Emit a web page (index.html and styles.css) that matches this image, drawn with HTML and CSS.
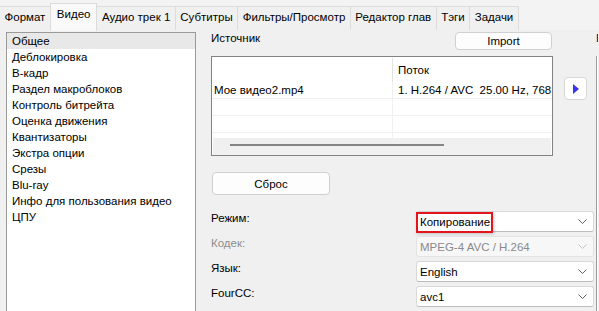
FILE: index.html
```html
<!DOCTYPE html>
<html lang="ru">
<head>
    <meta charset="UTF-8">
    <title>Видео</title>
    <link rel="stylesheet" href="styles.css">
</head>
<body>
    <div class="tabs">
        <div class="tab">Формат</div>
        <div class="tab active">Видео</div>
        <div class="tab">Аудио трек 1</div>
        <div class="tab">Субтитры</div>
        <div class="tab">Фильтры/Просмотр</div>
        <div class="tab">Редактор глав</div>
        <div class="tab">Тэги</div>
        <div class="tab">Задачи</div>
    </div>

    <div class="panel">
        <ul class="nav-list">
            <li class="selected">Общее</li>
            <li>Деблокировка</li>
            <li>B-кадр</li>
            <li>Раздел макроблоков</li>
            <li>Контроль битрейта</li>
            <li>Оценка движения</li>
            <li>Квантизаторы</li>
            <li>Экстра опции</li>
            <li>Срезы</li>
            <li>Blu-ray</li>
            <li>Инфо для пользования видео</li>
            <li>ЦПУ</li>
        </ul>

        <div class="main">
            <div class="source-head">
                <span>Источник</span>
                <button class="btn import">Import</button>
            </div>

            <div class="source-row">
                <div class="streams">
                    <div class="grid">
                        <div class="row head"><div class="cell c1"></div><div class="cell c2">Поток</div></div>
                        <div class="row first"><div class="cell c1">Мое видео2.mp4</div><div class="cell c2">1. H.264 / AVC&nbsp; 25.00 Hz, 768 x 432</div></div>
                        <div class="row"><div class="cell c1"></div><div class="cell c2"></div></div>
                        <div class="row"><div class="cell c1"></div><div class="cell c2"></div></div>
                        <div class="row stub"><div class="cell c1"></div><div class="cell c2"></div></div>
                    </div>
                    <div class="hscroll"><div class="thumb"></div></div>
                </div>
                <button class="play">
                    <svg width="6" height="10" viewBox="0 0 6 10"><polygon points="0,0 6,5 0,10" fill="#3535f5"/></svg>
                </button>
            </div>

            <button class="btn reset">Сброс</button>

            <div class="form">
                <div class="form-row">
                    <label>Режим:</label>
                    <div class="combo">
                        <span>Копирование</span>
                        <svg class="chev" width="9" height="5" viewBox="0 0 9 5"><path d="M0.5 0.5 L4.5 4.5 L8.5 0.5" stroke="#606060" fill="none"/></svg>
                        <div class="mark"></div>
                    </div>
                </div>
                <div class="form-row disabled">
                    <label>Кодек:</label>
                    <div class="combo">
                        <span>MPEG-4 AVC / H.264</span>
                        <svg class="chev" width="9" height="5" viewBox="0 0 9 5"><path d="M0.5 0.5 L4.5 4.5 L8.5 0.5" stroke="#c4c4c4" fill="none"/></svg>
                    </div>
                </div>
                <div class="form-row">
                    <label>Язык:</label>
                    <div class="combo">
                        <span>English</span>
                        <svg class="chev" width="9" height="5" viewBox="0 0 9 5"><path d="M0.5 0.5 L4.5 4.5 L8.5 0.5" stroke="#606060" fill="none"/></svg>
                    </div>
                </div>
                <div class="form-row">
                    <label>FourCC:</label>
                    <div class="combo">
                        <span>avc1</span>
                        <svg class="chev" width="9" height="5" viewBox="0 0 9 5"><path d="M0.5 0.5 L4.5 4.5 L8.5 0.5" stroke="#606060" fill="none"/></svg>
                    </div>
                </div>
            </div>
        </div>

        <div class="side">
            <div class="side-title">Вывод</div>
            <div class="side-box"></div>
        </div>
    </div>
</body>
</html>
```

FILE: styles.css
```css
body {
    margin: 0;
    width: 599px;
    height: 311px;
    overflow: hidden;
    background: #f0f0f0;
    font-family: 'Liberation Sans', Arial, sans-serif;
    font-size: 11.5px;
    color: #000;
}
.tabs {
    display: flex;
    align-items: flex-start;
    height: 30px;
    background: #f3f3f3;
}
.tab {
    flex-shrink: 0;
    margin-top: 6px;
    height: 23px;
    line-height: 21px;
    padding: 0 4.5px;
    border: 1px solid #dcdcdc;
    border-bottom: none;
    border-left: none;
    background: #f0f0f0;
    white-space: nowrap;
}
.tab.active {
    margin-top: 3px;
    height: 27px;
    padding: 0 6px;
    background: #f9f9f9;
    border-left: 1px solid #dcdcdc;
    margin-left: -1px;
}
.panel {
    display: flex;
    align-items: flex-start;
    padding: 2px 0 0 6px;
}
.nav-list {
    flex-shrink: 0;
    list-style: none;
    margin: 0;
    padding: 0;
    width: 190px;
    height: 290px;
    box-sizing: border-box;
    border: 1px solid #9a9a9a;
    background: #fff;
}
.nav-list li {
    height: 16px;
    line-height: 16px;
    padding-left: 5px;
    white-space: nowrap;
}
.nav-list li.selected { background: #e8e8e8; }
.main {
    flex-shrink: 0;
    width: 383px;
    margin-left: 15px;
}
.source-head {
    display: flex;
    align-items: flex-start;
    height: 18px;
    padding-right: 42px;
}
.source-head span { line-height: 13px; }
.btn {
    font: inherit;
    color: #000;
    background: #fdfdfd;
    border: 1px solid #d0d0d0;
    border-radius: 4px;
    padding: 0;
}
.import {
    margin-left: auto;
    width: 97px;
    height: 18px;
    line-height: 16px;
}
.source-row {
    display: flex;
    align-items: flex-start;
    margin-top: 6px;
}
.streams {
    flex-shrink: 0;
    width: 342px;
    height: 100px;
    box-sizing: border-box;
    border: 1px solid #828282;
    background: #fff;
    overflow: hidden;
}
.row {
    display: flex;
    height: 17px;
    border-top: 1px solid #f0f0f0;
    box-sizing: border-box;
}
.row.head {
    height: 25px;
    border-top: none;
    padding-top: 1px;
}
.row.first {
    height: 16px;
    border-top: none;
}
.row.stub { height: 6px; }
.cell {
    line-height: 16px;
    white-space: nowrap;
    overflow: hidden;
}
.c1 {
    flex-shrink: 0;
    width: 181px;
    padding-left: 2px;
    box-sizing: border-box;
    border-right: 1px solid #f0f0f0;
}
.c2 {
    flex: 1;
    padding-left: 5px;
}
.head .cell { line-height: 24px; }
.head .c1 { border-right-color: #e3e3e3; }
.hscroll {
    height: 17px;
    margin: 0 1px;
    background: #f0f0f0;
    padding-top: 6px;
    box-sizing: border-box;
}
.thumb {
    width: 214px;
    height: 2px;
    margin-left: 17px;
    background: #858585;
}
.play {
    flex-shrink: 0;
    margin-left: 11px;
    margin-top: 21px;
    width: 23px;
    height: 23px;
    background: #fff;
    border: 1px solid #d6d6d6;
    border-radius: 4px;
    padding: 0;
    display: flex;
    align-items: center;
    justify-content: center;
}
.reset {
    display: block;
    margin: 16px 0 0 1px;
    width: 118px;
    height: 23px;
}
.form {
    margin-top: 16px;
    display: flex;
    flex-direction: column;
    gap: 4px;
}
.form-row {
    display: flex;
    align-items: flex-start;
}
.form-row label {
    flex-shrink: 0;
    width: 205px;
    line-height: 15px;
}
.combo {
    flex-shrink: 0;
    position: relative;
    width: 178px;
    height: 21px;
    box-sizing: border-box;
    border: 1px solid #d9d9d9;
    border-bottom-color: #bdbdbd;
    border-radius: 3px;
    background: #fff;
    display: flex;
    align-items: center;
    padding-left: 3px;
}
.combo span { flex: 1; }
.chev { margin-right: 6px; }
.disabled label { color: #8d8d8d; }
.disabled .combo {
    background: #f7f7f7;
    border-color: #e3e3e3;
    color: #8a8a8a;
}
.mark {
    position: absolute;
    left: -1px;
    top: 0;
    width: 77px;
    height: 21px;
    box-sizing: border-box;
    border: 2px solid #e3141c;
    box-shadow: 1px 1px 3px rgba(0, 0, 0, 0.2);
}
.side {
    flex-shrink: 0;
    margin-left: 2px;
    width: 2px;
    overflow: hidden;
}
.side-title {
    line-height: 13px;
    color: #001a55;
    white-space: nowrap;
}
.side-box {
    margin-top: 11px;
    height: 260px;
    border-left: 1px solid #9a9a9a;
    background: #fff;
}
```
